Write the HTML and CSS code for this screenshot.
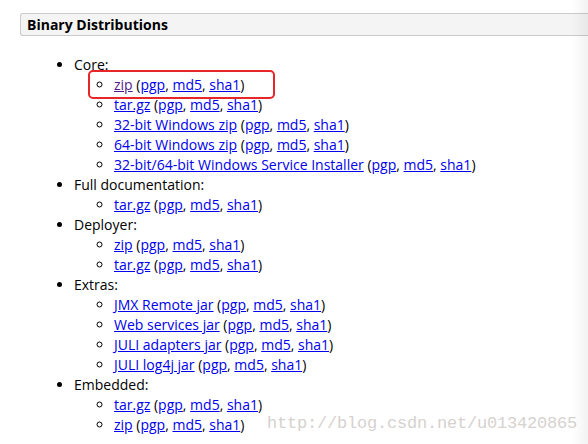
FILE: index.html
```html
<!DOCTYPE html>
<html>
<head>
<meta charset="utf-8">
<link rel="stylesheet" href="styles.css">
</head>
<body>
<div class="page">
  <h3 class="section">Binary Distributions</h3>
  <ul class="dist">
    <li>Core:
      <ul>
        <li class="marked"><a class="visited" href="#a">zip</a> (<a href="#b">pgp</a>, <a href="#c">md5</a>, <a href="#d">sha1</a>)<span class="highlight"></span></li>
        <li><a href="#e">tar.gz</a> (<a href="#b">pgp</a>, <a href="#c">md5</a>, <a href="#d">sha1</a>)</li>
        <li><a href="#f">32-bit Windows zip</a> (<a href="#b">pgp</a>, <a href="#c">md5</a>, <a href="#d">sha1</a>)</li>
        <li><a href="#g">64-bit Windows zip</a> (<a href="#b">pgp</a>, <a href="#c">md5</a>, <a href="#d">sha1</a>)</li>
        <li><a href="#h">32-bit/64-bit Windows Service Installer</a> (<a href="#b">pgp</a>, <a href="#c">md5</a>, <a href="#d">sha1</a>)</li>
      </ul>
    </li>
    <li>Full documentation:
      <ul>
        <li><a href="#e">tar.gz</a> (<a href="#b">pgp</a>, <a href="#c">md5</a>, <a href="#d">sha1</a>)</li>
      </ul>
    </li>
    <li>Deployer:
      <ul>
        <li><a href="#i">zip</a> (<a href="#b">pgp</a>, <a href="#c">md5</a>, <a href="#d">sha1</a>)</li>
        <li><a href="#e">tar.gz</a> (<a href="#b">pgp</a>, <a href="#c">md5</a>, <a href="#d">sha1</a>)</li>
      </ul>
    </li>
    <li>Extras:
      <ul>
        <li><a href="#j">JMX Remote jar</a> (<a href="#b">pgp</a>, <a href="#c">md5</a>, <a href="#d">sha1</a>)</li>
        <li><a href="#k">Web services jar</a> (<a href="#b">pgp</a>, <a href="#c">md5</a>, <a href="#d">sha1</a>)</li>
        <li><a href="#l">JULI adapters jar</a> (<a href="#b">pgp</a>, <a href="#c">md5</a>, <a href="#d">sha1</a>)</li>
        <li><a href="#m">JULI log4j jar</a> (<a href="#b">pgp</a>, <a href="#c">md5</a>, <a href="#d">sha1</a>)</li>
      </ul>
    </li>
    <li>Embedded:
      <ul>
        <li><a href="#e">tar.gz</a> (<a href="#b">pgp</a>, <a href="#c">md5</a>, <a href="#d">sha1</a>)</li>
        <li><a href="#i">zip</a> (<a href="#b">pgp</a>, <a href="#c">md5</a>, <a href="#d">sha1</a>)</li>
      </ul>
    </li>
  </ul>
</div>
<div class="watermark">http://blog.csdn.net/u013420865</div>
<div class="edge-shade"></div>
</body>
</html>
```
FILE: styles.css
```css
html, body {
  margin: 0;
  padding: 0;
  background: #fff;
}
body {
  font-family: "Open Sans", "Liberation Sans", sans-serif;
  font-size: 14px;
  line-height: 20px;
  color: #000;
  overflow: hidden;
  height: 444px;
  position: relative;
}
.page {
  padding: 13px 0 0 20px;
}
.section {
  margin: 0 -20px 0 0;
  font-size: 14px;
  font-weight: bold;
  line-height: 19px;
  padding: 1px 6px 1px 6px;
  background: #f4f4f4;
  border: 1px solid #cbcbcb;
  border-right: none;
  border-radius: 3px 0 0 3px;
}
.dist {
  margin: 19px 0 0 0;
  padding-left: 40px;
  margin-left: 14px;
  list-style: disc;
}
.dist ul {
  margin: 0;
  padding-left: 40px;
  list-style: circle;
}
a {
  color: #0000ee;
  text-decoration: underline;
}
a.visited {
  color: #551a8b;
}
.marked {
  position: relative;
}
.highlight {
  position: absolute;
  left: -26px;
  top: -5px;
  width: 183px;
  height: 25px;
  border: 2px solid #e8262a;
  border-radius: 5px;
}
.watermark {
  position: absolute;
  left: 267px;
  top: 413px;
  font-family: "Liberation Mono", monospace;
  font-size: 17px;
  line-height: 22px;
  letter-spacing: -0.2px;
  color: #d6d2ce;
  white-space: nowrap;
}
.edge-shade {
  position: absolute;
  top: 0;
  right: 0;
  width: 16px;
  height: 444px;
  background: linear-gradient(to right, rgba(0,0,0,0), rgba(0,0,0,0.05));
  pointer-events: none;
}
```
